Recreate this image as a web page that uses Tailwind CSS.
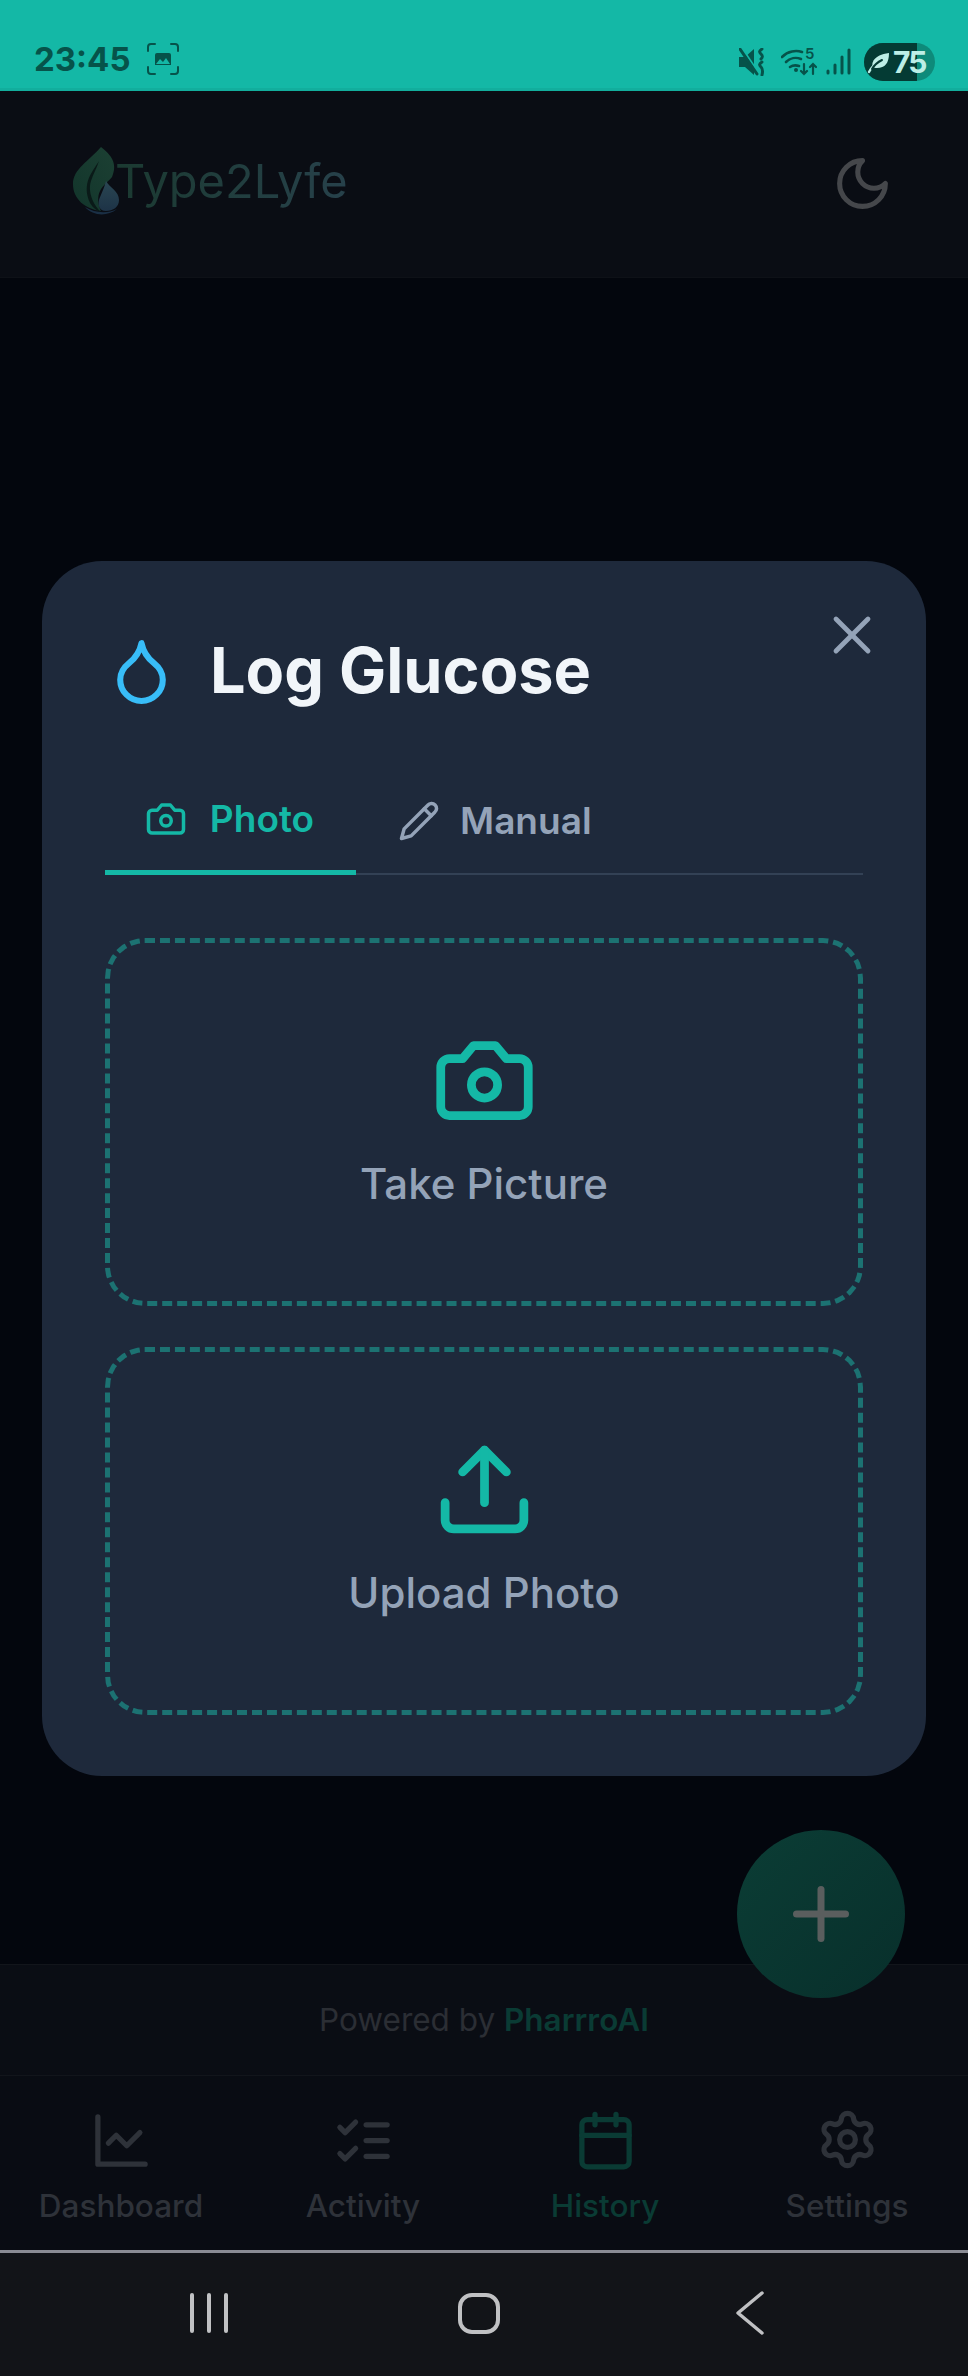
<!DOCTYPE html>
<html lang="en">
<head>
    <meta charset="UTF-8">
    <meta name="viewport" content="width=device-width, initial-scale=1.0">
    <title>Type2Lyfe</title>
    <script src="https://cdn.jsdelivr.net/npm/@tailwindcss/browser@4"></script>
</head>
<body class="bg-[#03060d]">
<div class="relative w-[968px] h-[2376px] overflow-hidden flex flex-col font-['Inter',sans-serif]">

    <!-- Status bar -->
    <div class="h-[91px] shrink-0 bg-[#14b8a6] border-b-[3px] border-[#12ae9d] relative flex items-end justify-between pl-[34px] pr-[33px] pb-[12px]">
        <div class="flex items-center gap-[16px]">
            <span class="text-[33px] leading-[34px] font-bold text-[#06534a]">23:45</span>
            <svg width="32" height="32" viewBox="0 0 32 32" fill="none" stroke="#06534a" stroke-width="2" stroke-linecap="round">
                <path d="M1 8V4a3 3 0 0 1 3-3h4M24 1h4a3 3 0 0 1 3 3v4M31 24v4a3 3 0 0 1-3 3h-4M8 31H4a3 3 0 0 1-3-3v-4"/>
                <path d="M8 12a2 2 0 0 1 2-2h12a2 2 0 0 1 2 2v10H8z" fill="#06534a" stroke="none"/>
                <path d="M9 21l4-5 3 3 3-4 4 6z" fill="#14b8a6" stroke="none"/>
            </svg>
        </div>
        <div class="flex items-center">
            <svg class="mr-[14px]" width="28" height="28" viewBox="0 0 28 28" fill="#06534a">
                <path d="M0 9h6l9-8v26l-9-8H0z"/>
                <path d="M3 0l18 27" stroke="#14b8a6" stroke-width="2"/>
                <path d="M1 1l17 25" stroke="#06534a" stroke-width="3" stroke-linecap="round"/>
                <path d="M23 1c-3 2-3 3-1 5s2 3 0 5" fill="none" stroke="#06534a" stroke-width="3" stroke-linecap="round"/>
                <path d="M23 14c-3 2-3 3-1 5s2 4 1 8" fill="none" stroke="#06534a" stroke-width="3" stroke-linecap="round"/>
            </svg>
            <svg class="mr-[9px] -mt-[3px]" width="36" height="32" viewBox="0 -3 36 32" fill="none" stroke="#06534a" stroke-width="2.600" stroke-linecap="round">
                <path d="M1 10c6-6 14-7 20-5"/>
                <path d="M5 15c4-4 10-5 15-3"/>
                <path d="M9 20c3-2 6-2 9-1"/>
                <circle cx="15" cy="23" r="2" fill="#06534a" stroke="none"/>
                <path d="M23 17v10m-3-3 3 3 3-3M32 27V17m-3 3 3-3 3 3" stroke-width="2.200"/>
                <text x="24" y="12" font-size="15" font-weight="600" fill="#06534a" stroke="none" font-family="Inter">5</text>
            </svg>
            <svg class="mr-[13px]" width="25" height="27" viewBox="0 0 25 27" fill="none" stroke="#06534a" stroke-width="3" stroke-linecap="round">
                <path d="M2 25v-2M9 25v-8M16 25V9M23 25V2"/>
            </svg>
            <div class="relative w-[71px] h-[38px] rounded-full overflow-hidden bg-[#0e8a7a] flex items-center -my-[6px]">
                <div class="absolute left-0 top-0 bottom-0 w-[53px] bg-[#043b34]"></div>
                <svg class="relative ml-[3px] shrink-0" width="24" height="24" viewBox="0 0 24 24" fill="#bdeee6">
                    <path d="M22 3c0 10-4 15-12 15-2 0-3-.5-4-1.500C4 14 6 5 22 3z"/>
                    <path d="M2 22c3-6 7-9 12-11" fill="none" stroke="#bdeee6" stroke-width="2.400" stroke-linecap="round"/>
                    <path d="M5 19c3-5 6-7 10-9" fill="none" stroke="#043b34" stroke-width="2" stroke-linecap="round"/>
                </svg>
                <span class="relative ml-[2px] text-[30px] leading-[38px] font-bold text-[#bdeee6] tracking-[-2px]">75</span>
            </div>
        </div>
    </div>

    <!-- Header -->
    <header class="h-[187px] shrink-0 bg-[#0a0d14] border-b border-[#0e1117] flex items-center justify-between pl-[73px] pr-[75px]">
        <div class="flex items-center -mt-[6px]">
            <svg class="-mr-[5px]" width="47" height="69" viewBox="0 0 47 69">
                <defs>
                    <linearGradient id="leaf" x1="0" y1="1" x2="1" y2="0">
                        <stop offset="0" stop-color="#12352b"/>
                        <stop offset="1" stop-color="#1c4033"/>
                    </linearGradient>
                    <linearGradient id="drop" x1="0" y1="0" x2="0" y2="1">
                        <stop offset="0" stop-color="#2a4652"/>
                        <stop offset="1" stop-color="#1d3347"/>
                    </linearGradient>
                </defs>
                <path d="M28 0C38 8 45 16 39 30C36 34 30 38 27 44C24 50 25 58 28 64C12 62 0 52 0 37C0 22 16 14 28 0Z" fill="url(#leaf)"/>
                <path d="M26 14C20 24 8 36 17 56C20 61 24 64 28 65C22 60 14 46 18 34C20 27 24 21 26 14Z" fill="#0a1a18"/>
                <path d="M33 34C37 41 46 44 46 53C46 60 40 64 33 64C26 64 25 58 26 53C28 47 31 42 33 34Z" fill="url(#drop)"/>
                <path d="M12 60C20 69 34 70 44 62C34 67 22 66 12 60Z" fill="#1a2f45"/>
            </svg>
            <span class="text-[47px] leading-[60px] font-normal bg-linear-to-r from-[#1b3a31] to-[#27414b] bg-clip-text text-transparent">Type2Lyfe</span>
        </div>
        <svg class="-mt-[1px]" width="61" height="61" viewBox="0 0 24 24" fill="none" stroke="#45474b" stroke-width="2" stroke-linecap="round" stroke-linejoin="round">
            <path d="M12 3a6 6 0 0 0 9 9 9 9 0 1 1-9-9Z"/>
        </svg>
    </header>

    <!-- Empty page body behind the dialog -->
    <main class="flex-1 bg-[#03060d]"></main>

    <!-- Footer -->
    <div class="h-[111px] shrink-0 bg-[#0a0d14] border-t border-[#12151b] flex items-center justify-center text-[31.500px]">
        <span class="text-[#2b2e34]">Powered by&nbsp;</span><span class="font-semibold text-[#0a3b34]">PharrroAI</span>
    </div>

    <!-- Bottom tabs -->
    <nav class="h-[175px] shrink-0 bg-[#090c13] border-t border-[#12151b] grid grid-cols-4 pt-[33px]">
        <div class="flex flex-col items-center">
            <svg width="63" height="63" viewBox="0 0 24 24" fill="none" stroke="#2e3239" stroke-width="2" stroke-linecap="round" stroke-linejoin="round">
                <path d="M3 3v18h18"/>
                <path d="m19 9-5 5-4-4-3 3"/>
            </svg>
            <span class="mt-[12px] text-[31.500px] leading-[44px] font-medium text-[#2e3239]">Dashboard</span>
        </div>
        <div class="flex flex-col items-center">
            <svg width="63" height="63" viewBox="0 0 24 24" fill="none" stroke="#2e3239" stroke-width="2" stroke-linecap="round" stroke-linejoin="round">
                <path d="m3 17 2 2 4-4"/>
                <path d="m3 7 2 2 4-4"/>
                <path d="M13 6h8"/>
                <path d="M13 12h8"/>
                <path d="M13 18h8"/>
            </svg>
            <span class="mt-[12px] text-[31.500px] leading-[44px] font-medium text-[#2e3239]">Activity</span>
        </div>
        <div class="flex flex-col items-center">
            <svg width="63" height="63" viewBox="0 0 24 24" fill="none" stroke="#0a3b34" stroke-width="2" stroke-linecap="round" stroke-linejoin="round">
                <path d="M8 2v4"/>
                <path d="M16 2v4"/>
                <rect width="18" height="18" x="3" y="4" rx="2"/>
                <path d="M3 10h18"/>
            </svg>
            <span class="mt-[12px] text-[31.500px] leading-[44px] font-medium text-[#0a3b34]">History</span>
        </div>
        <div class="flex flex-col items-center">
            <svg class="-mt-[1px]" width="63" height="63" viewBox="0 0 24 24" fill="none" stroke="#2e3239" stroke-width="2" stroke-linecap="round" stroke-linejoin="round">
                <path d="M9.671 4.136a2.34 2.34 0 0 1 4.659 0 2.34 2.34 0 0 0 3.319 1.915 2.34 2.34 0 0 1 2.33 4.033 2.34 2.34 0 0 0 0 3.831 2.34 2.34 0 0 1-2.33 4.033 2.34 2.34 0 0 0-3.319 1.915 2.34 2.34 0 0 1-4.659 0 2.34 2.34 0 0 0-3.32-1.915 2.34 2.34 0 0 1-2.33-4.033 2.34 2.34 0 0 0 0-3.831A2.34 2.34 0 0 1 6.35 6.051a2.34 2.34 0 0 0 3.32-1.915"/>
                <circle cx="12" cy="12" r="3"/>
            </svg>
            <span class="mt-[13px] text-[31.500px] leading-[44px] font-medium text-[#2e3239]">Settings</span>
        </div>
    </nav>

    <!-- Android navigation bar -->
    <div class="h-[126px] shrink-0 bg-[#121418] border-t-[3px] border-[#8a8c94] relative">
        <div class="absolute left-[190px] top-[40px] flex gap-[13px]">
            <div class="w-[4px] h-[40px] rounded-full bg-[#c0c1c3]"></div>
            <div class="w-[4px] h-[40px] rounded-full bg-[#c0c1c3]"></div>
            <div class="w-[4px] h-[40px] rounded-full bg-[#c0c1c3]"></div>
        </div>
        <div class="absolute left-[458px] top-[40px] w-[42px] h-[41px] rounded-[14px] border-[4px] border-[#c0c1c3]"></div>
        <svg class="absolute left-[735px] top-[37px]" width="30" height="46" viewBox="0 0 30 46" fill="none" stroke="#c0c1c3" stroke-width="3.500" stroke-linecap="round" stroke-linejoin="round">
            <path d="M27 3 3 23l24 20"/>
        </svg>
    </div>

    <!-- Floating add button -->
    <div class="absolute left-[737px] top-[1830px] w-[168px] h-[168px] rounded-full bg-linear-to-br from-[#0b3d35] to-[#082f2b] flex items-center justify-center">
        <svg width="84" height="84" viewBox="0 0 24 24" fill="none" stroke="#5a5e5e" stroke-width="2" stroke-linecap="round" stroke-linejoin="round">
            <path d="M5 12h14"/>
            <path d="M12 5v14"/>
        </svg>
    </div>

    <!-- Log Glucose dialog -->
    <div class="absolute inset-x-[42px] top-[561px] h-[1215px] rounded-[60px] bg-[#1e293b] px-[63px] pt-[71px]">
        <button class="absolute right-[42px] top-[42px] w-[64px] h-[64px]">
            <svg width="64" height="64" viewBox="0 0 24 24" fill="none" stroke="#94a3b8" stroke-width="1.800" stroke-linecap="round" stroke-linejoin="round">
                <path d="M18 6 6 18"/>
                <path d="m6 6 12 12"/>
            </svg>
        </button>

        <div class="flex items-center h-[76px]">
            <svg class="shrink-0" width="73" height="73" viewBox="0 0 24 24" fill="none" stroke="#38bdf8" stroke-width="2" stroke-linecap="round" stroke-linejoin="round">
                <path d="M12 22a7 7 0 0 0 7-7c0-2-1-3.900-3-5.500s-3.500-4-4-6.500c-.5 2.500-2 4.900-4 6.500C6 11.100 5 13 5 15a7 7 0 0 0 7 7z"/>
            </svg>
            <h2 class="ml-[32px] text-[63px] leading-[76px] font-bold text-[#f1f5f9]">Log Glucose</h2>
        </div>

        <div class="mt-[59px] flex h-[108px] border-b-2 border-[#334155]">
            <div class="w-[251px] h-[108px] border-b-[5px] border-[#14b8a6] flex items-center justify-center gap-[23px] text-[#14b8a6]">
                <svg class="shrink-0 -ml-[2px]" width="42" height="42" viewBox="0 0 24 24" fill="none" stroke="currentColor" stroke-width="2" stroke-linecap="round" stroke-linejoin="round">
                    <path d="M14.500 4h-5L7 7H4a2 2 0 0 0-2 2v9a2 2 0 0 0 2 2h16a2 2 0 0 0 2-2V9a2 2 0 0 0-2-2h-3l-2.500-3z"/>
                    <circle cx="12" cy="13" r="3"/>
                </svg>
                <span class="text-[37px] leading-[44px] font-semibold">Photo</span>
            </div>
            <div class="pl-[42px] flex items-center gap-[20px] pt-[2px] text-[#94a3b8]">
                <svg class="shrink-0" width="42" height="42" viewBox="0 0 24 24" fill="none" stroke="currentColor" stroke-width="2" stroke-linecap="round" stroke-linejoin="round">
                    <path d="M17 3a2.850 2.830 0 1 1 4 4L7.500 20.500 2 22l1.500-5.500Z"/>
                    <path d="m15 5 4 4"/>
                </svg>
                <span class="text-[37px] leading-[44px] font-semibold">Manual</span>
            </div>
        </div>

        <div class="mt-[63px] flex flex-col gap-[41px]">
            <button class="h-[368px] rounded-[40px] border-[5px] border-dashed border-[#1c7272] flex flex-col items-center justify-center gap-[21px] pb-[3px]">
                <svg width="105" height="105" viewBox="0 0 24 24" fill="none" stroke="#14b8a6" stroke-width="2" stroke-linecap="round" stroke-linejoin="round">
                    <path d="M14.500 4h-5L7 7H4a2 2 0 0 0-2 2v9a2 2 0 0 0 2 2h16a2 2 0 0 0 2-2V9a2 2 0 0 0-2-2h-3l-2.500-3z"/>
                    <circle cx="12" cy="13" r="3"/>
                </svg>
                <span class="text-[42px] leading-[60px] font-medium text-[#94a3b8]">Take Picture</span>
            </button>
            <button class="h-[368px] rounded-[40px] border-[5px] border-dashed border-[#1c7272] flex flex-col items-center justify-center gap-[21px] pb-[3px]">
                <svg width="105" height="105" viewBox="0 0 24 24" fill="none" stroke="#14b8a6" stroke-width="2" stroke-linecap="round" stroke-linejoin="round">
                    <path d="M21 15v4a2 2 0 0 1-2 2H5a2 2 0 0 1-2-2v-4"/>
                    <polyline points="17 8 12 3 7 8"/>
                    <line x1="12" x2="12" y1="3" y2="15"/>
                </svg>
                <span class="text-[42px] leading-[60px] font-medium text-[#94a3b8]">Upload Photo</span>
            </button>
        </div>
    </div>
</div>
</body>
</html>
